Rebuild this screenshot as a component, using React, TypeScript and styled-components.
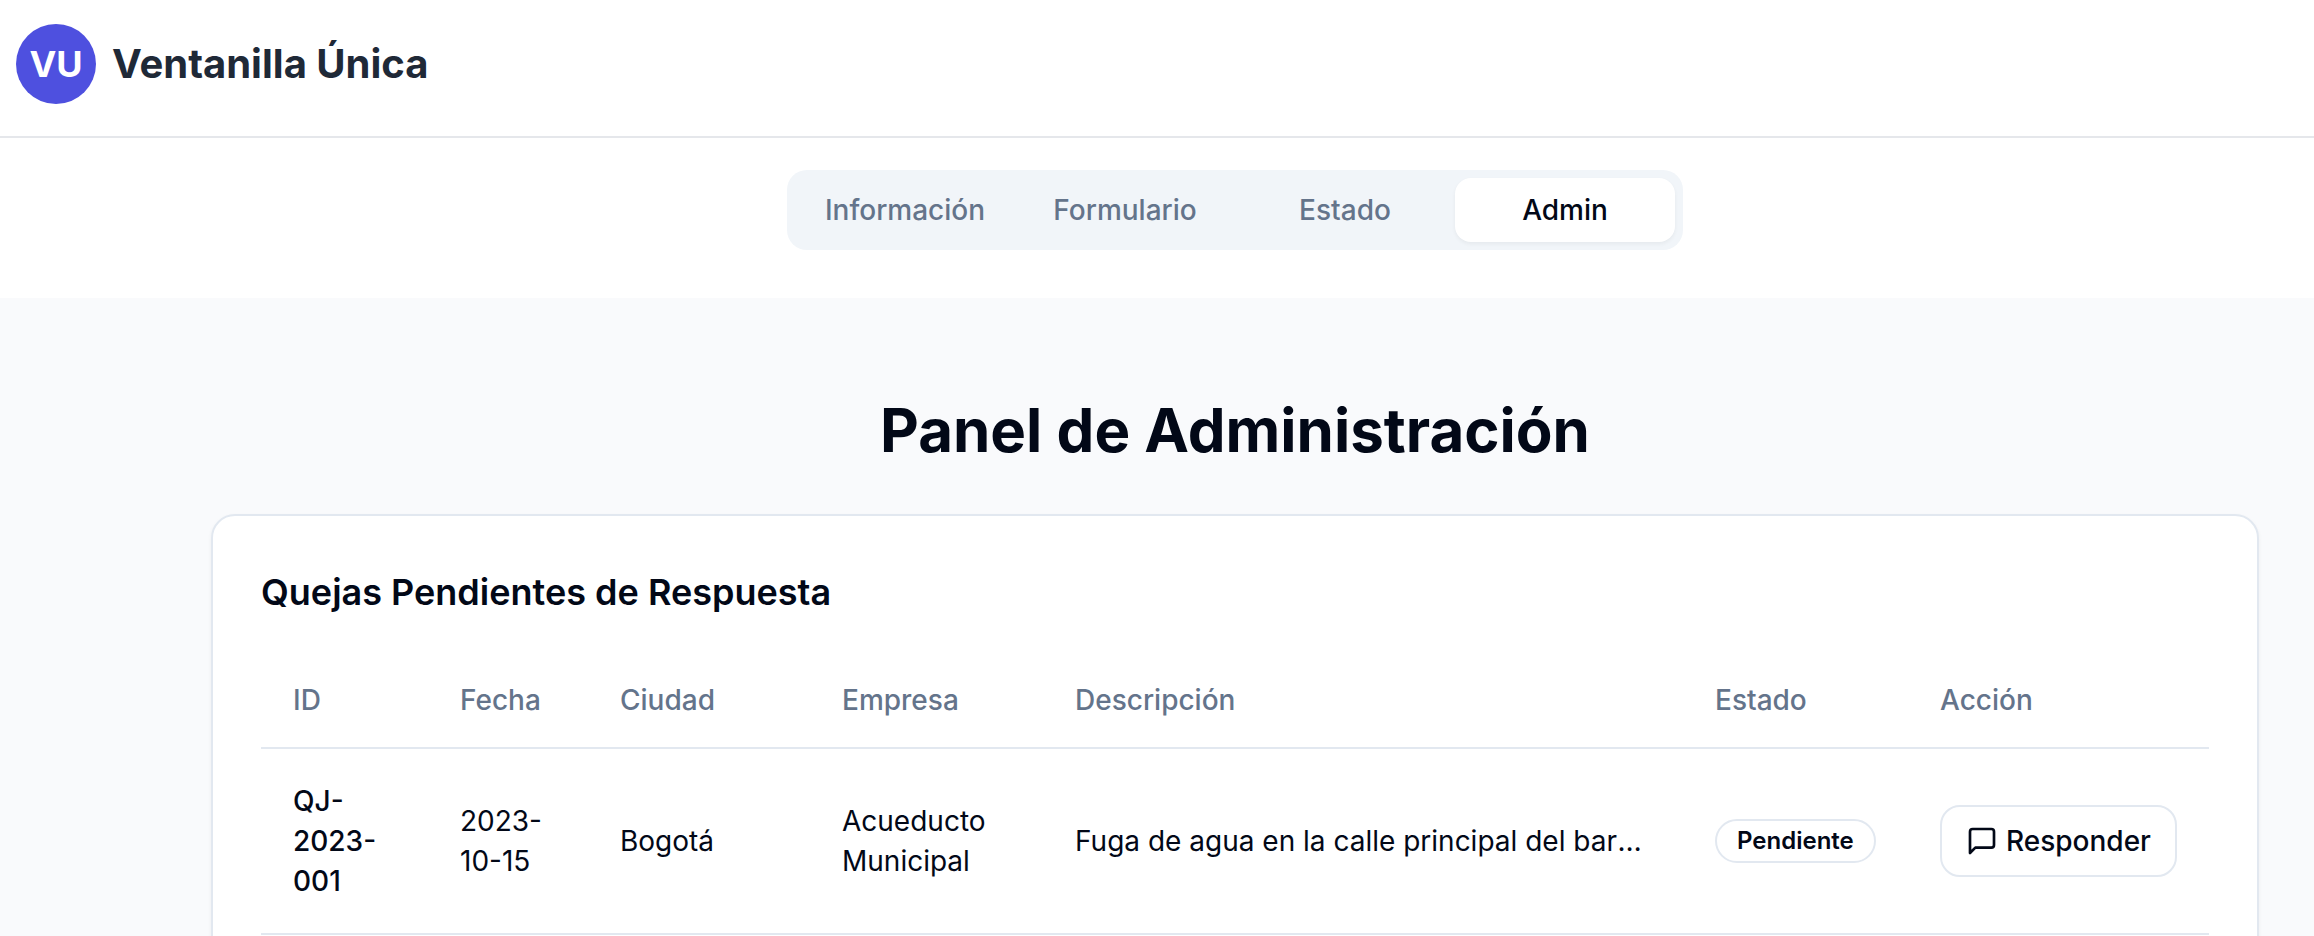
import { useState } from "react";
import styled, { createGlobalStyle } from "styled-components";

const GlobalStyle = createGlobalStyle`
  *, *::before, *::after { box-sizing: border-box; }
  body {
    margin: 0;
    background: #f9fafc;
    color: #020817;
    font-family: Inter, "Liberation Sans", sans-serif;
    font-size: 28px;
    line-height: 40px;
  }
  button { font: inherit; cursor: pointer; }
`;

const Page = styled.div`
  height: 100vh;
  overflow: hidden;
`;

const Header = styled.header`
  display: flex;
  align-items: center;
  gap: 16px;
  padding: 24px 16px 32px;
  background: #fff;
  border-bottom: 2px solid #e5e7eb;
`;

const Logo = styled.div`
  display: flex;
  align-items: center;
  justify-content: center;
  width: 80px;
  height: 80px;
  border-radius: 50%;
  background: #4e50df;
  color: #fff;
  font-size: 36px;
  font-weight: 700;
`;

const Brand = styled.span`
  color: #1f2937;
  font-size: 40px;
  line-height: 56px;
  font-weight: 700;
`;

const Nav = styled.nav`
  display: flex;
  justify-content: center;
  padding: 32px 0 48px 156px;
  background: #fff;
`;

const TabList = styled.div`
  display: grid;
  grid-template-columns: repeat(4, 1fr);
  width: 100%;
  max-width: 896px;
  padding: 8px;
  border-radius: 20px;
  background: #f1f5f9;
`;

const Tab = styled.button<{ $active: boolean }>`
  padding: 12px 24px;
  border: 0;
  border-radius: 16px;
  background: ${(p) => (p.$active ? "#fff" : "transparent")};
  color: ${(p) => (p.$active ? "#020817" : "#64748b")};
  box-shadow: ${(p) => (p.$active ? "0 2px 4px rgba(0, 0, 0, 0.05)" : "none")};
  font-weight: 500;
`;

const Main = styled.main`
  display: flex;
  flex-direction: column;
  align-items: center;
  gap: 48px;
  padding: 96px 0 96px 156px;
`;

const PageTitle = styled.h1`
  margin: 0;
  font-size: 60px;
  line-height: 72px;
  font-weight: 700;
`;

const Card = styled.section`
  width: 100%;
  max-width: 2048px;
  padding: 48px;
  border: 2px solid #e2e8f0;
  border-radius: 24px;
  background: #fff;
  box-shadow: 0 2px 4px rgba(0, 0, 0, 0.05);
`;

const CardTitle = styled.h2`
  margin: 0 0 32px;
  font-size: 36px;
  line-height: 56px;
  font-weight: 600;
`;

const Table = styled.table`
  width: 100%;
  table-layout: fixed;
  border-collapse: collapse;
  text-align: left;
`;

const Column = styled.col<{ $width?: number }>`
  width: ${(p) => (p.$width ? `${p.$width}px` : "auto")};
`;

const Row = styled.tr`
  border-bottom: 2px solid #e2e8f0;
`;

const HeadCell = styled.th`
  height: 96px;
  padding: 0 32px;
  color: #64748b;
  font-weight: 500;
`;

const Cell = styled.td<{ $strong?: boolean; $truncate?: boolean }>`
  padding: 32px;
  font-weight: ${(p) => (p.$strong ? 500 : 400)};
  ${(p) =>
    p.$truncate &&
    `
    overflow: hidden;
    text-overflow: ellipsis;
    white-space: nowrap;
  `}
`;

const Badge = styled.span`
  display: inline-flex;
  padding: 4px 20px;
  border: 2px solid #e2e8f0;
  border-radius: 22px;
  font-size: 24px;
  line-height: 32px;
  font-weight: 600;
  vertical-align: middle;
`;

const ActionButton = styled.button`
  display: inline-flex;
  align-items: center;
  gap: 8px;
  height: 72px;
  padding: 0 24px;
  border: 2px solid #e2e8f0;
  border-radius: 20px;
  background: #fff;
  color: #020817;
  font-weight: 500;
  white-space: nowrap;
  vertical-align: middle;
`;

const MessageIcon = () => (
  <svg
    width="32"
    height="32"
    viewBox="0 0 24 24"
    fill="none"
    stroke="currentColor"
    strokeWidth="2"
    strokeLinecap="round"
    strokeLinejoin="round"
    aria-hidden="true"
  >
    <path d="M21 15a2 2 0 0 1-2 2H7l-4 4V5a2 2 0 0 1 2-2h14a2 2 0 0 1 2 2z" />
  </svg>
);

const tabs = ["Información", "Formulario", "Estado", "Admin"];

const columns = [
  { label: "ID", width: 167 },
  { label: "Fecha", width: 160 },
  { label: "Ciudad", width: 222 },
  { label: "Empresa", width: 233 },
  { label: "Descripción" },
  { label: "Estado", width: 225 },
  { label: "Acción", width: 301 },
];

const complaints = [
  {
    id: "QJ-2023-001",
    date: "2023-10-15",
    city: "Bogotá",
    company: "Acueducto Municipal",
    description: "Fuga de agua en la calle principal del barrio",
    status: "Pendiente",
  },
];

export default function App() {
  const [active, setActive] = useState("Admin");

  return (
    <Page>
      <GlobalStyle />
      <Header>
        <Logo>VU</Logo>
        <Brand>Ventanilla Única</Brand>
      </Header>
      <Nav>
        <TabList role="tablist">
          {tabs.map((tab) => (
            <Tab
              key={tab}
              type="button"
              role="tab"
              aria-selected={tab === active}
              $active={tab === active}
              onClick={() => setActive(tab)}
            >
              {tab}
            </Tab>
          ))}
        </TabList>
      </Nav>
      <Main>
        <PageTitle>Panel de Administración</PageTitle>
        <Card>
          <CardTitle>Quejas Pendientes de Respuesta</CardTitle>
          <Table>
            <colgroup>
              {columns.map((column) => (
                <Column key={column.label} $width={column.width} />
              ))}
            </colgroup>
            <thead>
              <Row>
                {columns.map((column) => (
                  <HeadCell key={column.label} scope="col">
                    {column.label}
                  </HeadCell>
                ))}
              </Row>
            </thead>
            <tbody>
              {complaints.map((item) => (
                <Row key={item.id}>
                  <Cell $strong>{item.id}</Cell>
                  <Cell>{item.date}</Cell>
                  <Cell>{item.city}</Cell>
                  <Cell>{item.company}</Cell>
                  <Cell $truncate>{item.description}</Cell>
                  <Cell>
                    <Badge>{item.status}</Badge>
                  </Cell>
                  <Cell>
                    <ActionButton type="button">
                      <MessageIcon />
                      Responder
                    </ActionButton>
                  </Cell>
                </Row>
              ))}
            </tbody>
          </Table>
        </Card>
      </Main>
    </Page>
  );
}
